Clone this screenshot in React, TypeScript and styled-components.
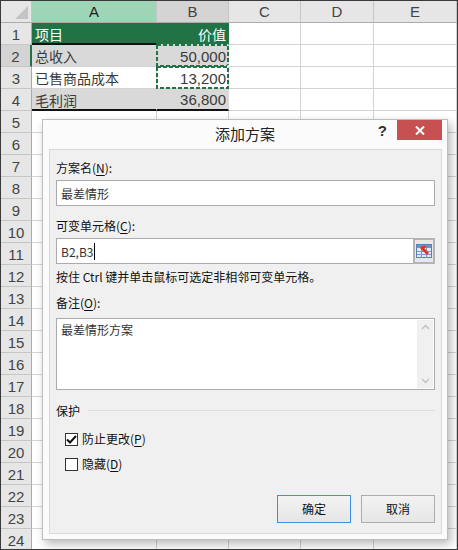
import React from 'react'
import styled, { createGlobalStyle, css } from 'styled-components'

const GlobalStyle = createGlobalStyle`
  html, body {
    margin: 0;
    padding: 0;
    background: #fff;
  }
`

const SHEET_FONT = `"Liberation Sans", "Noto Sans CJK SC", sans-serif`
const UI_FONT = `"Noto Sans CJK SC", "Liberation Sans", sans-serif`
const GREEN = '#217346'

const Frame = styled.div`
  position: relative;
  width: 458px;
  height: 550px;
  box-sizing: border-box;
  border: 1px solid #3a3a3a;
  overflow: hidden;
  background: #fff;
`

const Sheet = styled.div`
  display: grid;
  grid-template-columns: 31px 125px 72px 72px 73px 1fr;
  grid-template-rows: 22px;
  grid-auto-rows: 22px;
  font-family: ${SHEET_FONT};
`

const Corner = styled.div`
  position: relative;
  box-sizing: border-box;
  background: #e6e6e6;
  border-right: 1px solid #c6c6c6;
  border-bottom: 1px solid #ababab;

  &::after {
    content: '';
    position: absolute;
    right: 3px;
    bottom: 3px;
    width: 0;
    height: 0;
    border-left: 13px solid transparent;
    border-bottom: 13px solid #c4c4c4;
  }
`

const ColHead = styled.div<{ $tone?: 'sel' | 'dim' }>`
  box-sizing: border-box;
  display: flex;
  align-items: center;
  justify-content: center;
  font-size: 15px;
  color: #444;
  border-right: 1px solid #c6c6c6;
  border-bottom: 1px solid #ababab;
  background: ${(p) => (p.$tone === 'sel' ? '#9fd5b7' : p.$tone === 'dim' ? '#d4d4d4' : '#e6e6e6')};
  ${(p) =>
    p.$tone === 'sel' &&
    css`
      color: #222;
    `}
`

const RowHead = styled.div<{ $active?: boolean }>`
  box-sizing: border-box;
  display: flex;
  align-items: center;
  justify-content: center;
  padding-top: 2px;
  font-size: 15px;
  color: #444;
  background: ${(p) => (p.$active ? '#d4d4d4' : '#e6e6e6')};
  border-bottom: 1px solid #c6c6c6;
  border-right: ${(p) => (p.$active ? `2px solid ${GREEN}` : '1px solid #ababab')};
`

const Cell = styled.div<{ $fill?: 'green' | 'gray'; $right?: boolean; $num?: boolean; $thick?: boolean }>`
  position: relative;
  box-sizing: border-box;
  display: flex;
  align-items: center;
  justify-content: ${(p) => (p.$right ? 'flex-end' : 'flex-start')};
  padding: 1px 2px 0 3px;
  font-size: ${(p) => (p.$num ? '15px' : '14px')};
  white-space: nowrap;
  color: ${(p) => (p.$fill === 'green' ? '#fff' : '#3a3a3a')};
  background: ${(p) => (p.$fill === 'green' ? GREEN : p.$fill === 'gray' ? '#d9d9d9' : '#fff')};
  border-right: 1px solid
    ${(p) => (p.$fill === 'green' ? GREEN : p.$fill === 'gray' ? '#d9d9d9' : '#d4d4d4')};
  border-bottom: ${(p) => (p.$thick ? '2px solid #111' : '1px solid #d4d4d4')};
`

const Marquee = styled.svg`
  position: absolute;
  inset: 0;
  width: 100%;
  height: 100%;
  overflow: visible;
  pointer-events: none;
`

const Handle = styled.span`
  position: absolute;
  right: -3px;
  bottom: -3px;
  width: 5px;
  height: 5px;
  border-radius: 50%;
  background: #fff;
  border: 1px solid ${GREEN};
  box-sizing: border-box;
`

/* dialog */

const Dialog = styled.div`
  position: absolute;
  left: 41px;
  top: 118px;
  width: 406px;
  height: 421px;
  box-sizing: border-box;
  display: flex;
  flex-direction: column;
  background: #fbfbfb;
  border: 1px solid #bdbdbd;
  box-shadow: 3px 4px 9px rgba(0, 0, 0, 0.28);
  font-family: ${UI_FONT};
  color: #1a1a1a;
`

const TitleBar = styled.div`
  position: relative;
  height: 29px;
  display: flex;
  align-items: center;
  justify-content: center;
  flex-shrink: 0;
`

const Title = styled.div`
  font-size: 15px;
  line-height: 20px;
  color: #222;
  padding-bottom: 2px;
`

const TitleTools = styled.div`
  position: absolute;
  right: 5px;
  top: 0;
  display: flex;
  align-items: flex-start;
`

const HelpMark = styled.span`
  font-family: 'Liberation Sans', sans-serif;
  font-weight: bold;
  font-size: 15px;
  color: #333;
  margin: 2px 10px 0 0;
`

const CloseBtn = styled.div`
  width: 45px;
  height: 20px;
  background: #c75050;
  display: flex;
  align-items: center;
  justify-content: center;
`

const Panel = styled.div`
  flex: 1;
  margin: 0 5px 5px 6px;
  border: 1px solid #d9d9d9;
  background: #f0f0f0;
  padding: 10px 6px 10px 6px;
  display: flex;
  flex-direction: column;
  font-size: 12px;
  line-height: 16px;
`

const Label = styled.div<{ $gap?: number }>`
  margin-top: ${(p) => p.$gap ?? 0}px;
  margin-bottom: 4px;
  color: #111;
`

const U = styled.span`
  text-decoration: underline;
  text-underline-offset: 2px;
`

const Field = styled.div`
  height: 26px;
  box-sizing: border-box;
  border: 1px solid #ababab;
  background: #fff;
  display: flex;
  align-items: stretch;
`

const FieldText = styled.div`
  flex: 1;
  display: flex;
  align-items: center;
  padding: 1px 4px 0;
  color: #333;
`

const Caret = styled.span`
  display: inline-block;
  width: 1px;
  height: 17px;
  background: #000;
  margin-left: 1px;
`

const RefButton = styled.div`
  width: 22px;
  margin: -1px -1px -1px 0;
  box-sizing: border-box;
  border: 2px solid #b4b4b4;
  background: #e8e8e8;
  display: flex;
  align-items: center;
  justify-content: center;
`

const Hint = styled.div`
  margin-top: 5px;
  color: #111;
`

const Memo = styled.div`
  margin-top: 3px;
  height: 72px;
  box-sizing: border-box;
  border: 1px solid #ababab;
  background: #fff;
  display: flex;
`

const MemoText = styled.div`
  flex: 1;
  padding: 3px 4px;
  color: #333;
`

const ScrollBar = styled.div`
  width: 16px;
  margin: 1px 1px 1px 0;
  background: #f0f0f0;
  display: flex;
  flex-direction: column;
  justify-content: space-between;
  align-items: center;
  padding: 4px 0;
  box-sizing: border-box;
`

const Group = styled.div`
  margin-top: 13px;
  display: flex;
  align-items: center;
  gap: 8px;
  color: #111;

  &::after {
    content: '';
    flex: 1;
    height: 1px;
    background: #dcdcdc;
    margin-top: -1px;
  }
`

const CheckRow = styled.label<{ $gap: number }>`
  margin-top: ${(p) => p.$gap}px;
  margin-left: 9px;
  display: flex;
  align-items: center;
  gap: 4px;
  color: #111;
`

const Box = styled.span`
  width: 13px;
  height: 13px;
  box-sizing: border-box;
  border: 1px solid #333;
  background: #fff;
  display: flex;
  align-items: center;
  justify-content: center;
`

const Buttons = styled.div`
  margin-top: auto;
  display: flex;
  justify-content: flex-end;
  gap: 10px;
`

const Btn = styled.div<{ $default?: boolean }>`
  width: 74px;
  height: 28px;
  box-sizing: border-box;
  display: flex;
  align-items: center;
  justify-content: center;
  border: 1px solid ${(p) => (p.$default ? '#3c8fe3' : '#adadad')};
  background: linear-gradient(#f3f3f3, #e6e6e6);
  color: #111;
`

type CellDef = {
  text?: string
  fill?: 'green' | 'gray'
  right?: boolean
  num?: boolean
  thick?: boolean
  marquee?: boolean
  handle?: boolean
}

const data: Record<number, CellDef[]> = {
  1: [{ text: '项目', fill: 'green', thick: true }, { text: '价值', fill: 'green', right: true }],
  2: [
    { text: '总收入', fill: 'gray' },
    { text: '50,000', fill: 'gray', right: true, num: true, marquee: true, handle: true },
  ],
  3: [{ text: '已售商品成本' }, { text: '13,200', right: true, num: true, marquee: true }],
  4: [
    { text: '毛利润', fill: 'gray', thick: true },
    { text: '36,800', fill: 'gray', right: true, num: true, thick: true },
  ],
}

const rows = Array.from({ length: 24 }, (_, i) => i + 1)

const RefIcon = () => (
  <svg width="16" height="14" viewBox="0 0 16 14">
    <rect x="0.5" y="0.5" width="15" height="13" fill="#dfe8f5" stroke="#5a7fb5" />
    <rect x="1" y="1" width="14" height="3" fill="#6d93cf" />
    <path d="M1 7.5h14M1 10.5h14M5.5 4v10M10.5 4v10" stroke="#7f9cc9" strokeWidth="1" />
    <path d="M6 2 L13 9 L11 11 L4 4 Z" fill="#d9342b" />
    <path d="M6 2 L6 7 L11 2 Z" fill="#d9342b" />
  </svg>
)

const Chevron = ({ up }: { up?: boolean }) => (
  <svg width="9" height="6" viewBox="0 0 9 6">
    <path d={up ? 'M1 5 L4.5 1.5 L8 5' : 'M1 1 L4.5 4.5 L8 1'} fill="none" stroke="#c2c2c2" strokeWidth="1.5" />
  </svg>
)

export default function App() {
  return (
    <>
      <GlobalStyle />
      <Frame>
        <Sheet>
          <Corner />
          <ColHead $tone="sel">A</ColHead>
          <ColHead $tone="dim">B</ColHead>
          <ColHead>C</ColHead>
          <ColHead>D</ColHead>
          <ColHead>E</ColHead>
          {rows.map((r) => {
            const defs = data[r] || []
            return (
              <React.Fragment key={r}>
                <RowHead $active={r === 2}>{r}</RowHead>
                {[0, 1, 2, 3, 4].map((c) => {
                  const d = defs[c] || {}
                  return (
                    <Cell key={c} $fill={d.fill} $right={d.right} $num={d.num} $thick={d.thick}>
                      {d.text}
                      {d.marquee && (
                        <Marquee>
                          <rect
                            x="0"
                            y="0"
                            width="100%"
                            height="100%"
                            fill="none"
                            stroke={GREEN}
                            strokeWidth="2"
                            strokeDasharray="4 2"
                          />
                        </Marquee>
                      )}
                      {d.handle && <Handle />}
                    </Cell>
                  )
                })}
              </React.Fragment>
            )
          })}
        </Sheet>

        <Dialog>
          <TitleBar>
            <Title>添加方案</Title>
            <TitleTools>
              <HelpMark>?</HelpMark>
              <CloseBtn>
                <svg width="10" height="9" viewBox="0 0 10 9">
                  <path d="M1 0.5 L9 8.5 M9 0.5 L1 8.5" stroke="#fff" strokeWidth="2" />
                </svg>
              </CloseBtn>
            </TitleTools>
          </TitleBar>
          <Panel>
            <Label>
              方案名(<U>N</U>):
            </Label>
            <Field>
              <FieldText>最差情形</FieldText>
            </Field>

            <Label $gap={12}>
              可变单元格(<U>C</U>):
            </Label>
            <Field>
              <FieldText>
                B2,B3
                <Caret />
              </FieldText>
              <RefButton>
                <RefIcon />
              </RefButton>
            </Field>
            <Hint>按住 Ctrl 键并单击鼠标可选定非相邻可变单元格。</Hint>

            <Label $gap={10}>
              备注(<U>O</U>):
            </Label>
            <Memo>
              <MemoText>最差情形方案</MemoText>
              <ScrollBar>
                <Chevron up />
                <Chevron />
              </ScrollBar>
            </Memo>

            <Group>保护</Group>
            <CheckRow $gap={12}>
              <Box>
                <svg width="11" height="9" viewBox="0 0 11 9">
                  <path d="M1 4.5 L4 7.5 L10 1" fill="none" stroke="#111" strokeWidth="2" />
                </svg>
              </Box>
              <span>
                防止更改(<U>P</U>)
              </span>
            </CheckRow>
            <CheckRow $gap={9}>
              <Box />
              <span>
                隐藏(<U>D</U>)
              </span>
            </CheckRow>

            <Buttons>
              <Btn $default>确定</Btn>
              <Btn>取消</Btn>
            </Buttons>
          </Panel>
        </Dialog>
      </Frame>
    </>
  )
}
